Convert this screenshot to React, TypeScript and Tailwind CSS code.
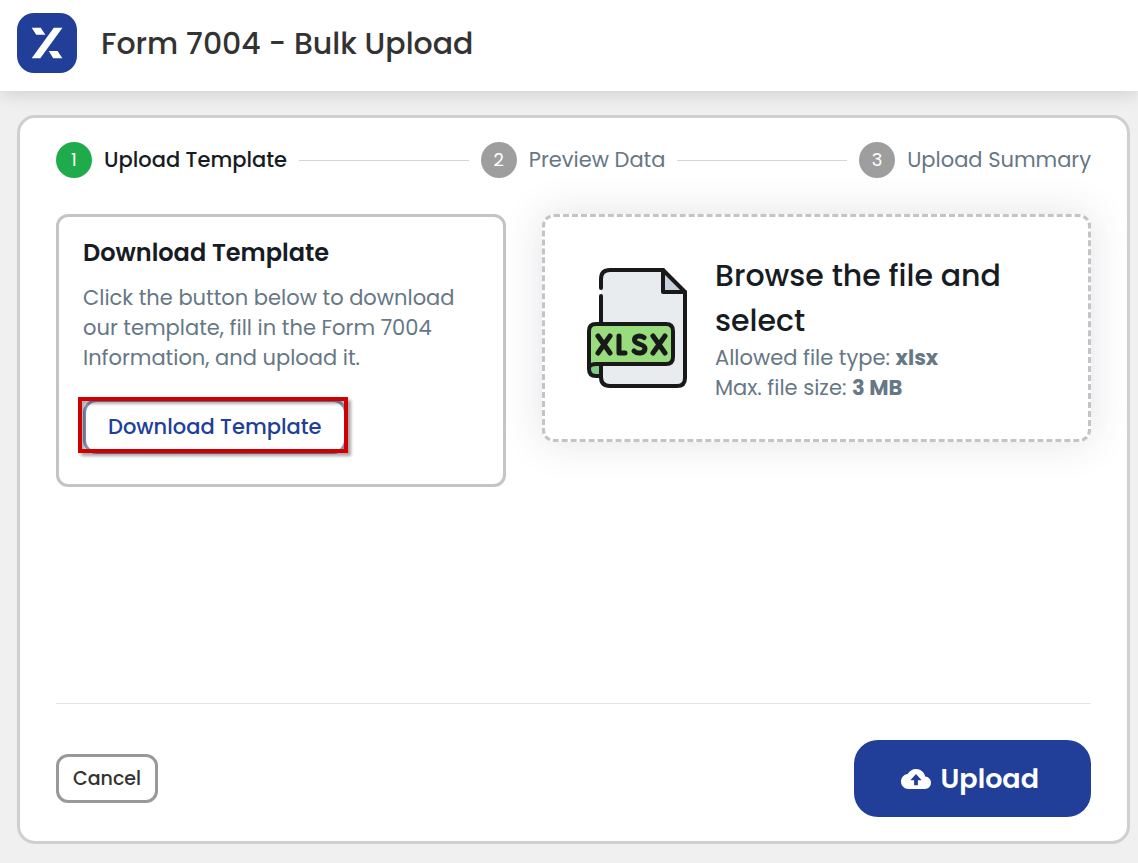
import { Fragment } from "react";

function Logo() {
    return (
        <svg viewBox="0 0 60 60" className="size-[60px] shrink-0" aria-hidden="true">
            <rect width="60" height="60" rx="17" fill="#213f99" />
            <path
                d="M36.800 14.700h8.700L23.300 45.300H14.700zM14.700 14.700h9l4.700 7H19.200zM31.800 38h8.700l4.900 7.300h-9.200z"
                fill="#fff"
            />
        </svg>
    );
}

function XlsxIcon() {
    return (
        <svg viewBox="0 0 100 120" className="h-[120px] w-[100px] shrink-0" aria-hidden="true">
            <path d="M14 8q0-6 6-6h56l22 22v88q0 6-6 6H22q-8 0-8-8z" fill="#e8ecef" />
            <path d="M76 2v22h22z" fill="#c8cfdf" />
            <path d="M14 96H2v5q0 7 7 7h5z" fill="#7ecb83" />
            <g fill="none" stroke="#191919" strokeWidth="4" strokeLinecap="round" strokeLinejoin="round">
                <path d="M14 20v-9q0-9 9-9h53l22 22v86q0 8-8 8H23q-9 0-9-9V97M14 54V28" />
                <path d="M76 2v22h22" />
                <path d="M2 94v7q0 7 7 7h5" />
                <path d="M9 56h70q7 0 7 7v26q0 7-7 7H9q-5 0-7 3V63q0-7 7-7z" fill="#98dc7d" />
            </g>
            <g fill="none" stroke="#191919" strokeWidth="5" strokeLinecap="round" strokeLinejoin="round">
                <path d="M11 68l12 17M23 68L11 85" />
                <path d="M32 68v17h6" />
                <path d="M57 69.500C54 67.500 47.500 67 47.500 72c0 5 10.500 3.500 10.500 8.500 0 5.500-8 5.500-11 2.500" />
                <path d="M66 68l12 17M78 68L66 85" />
            </g>
        </svg>
    );
}

function CloudUploadIcon() {
    return (
        <svg viewBox="0 4 24 16" className="h-5 w-[30px]" fill="currentColor" aria-hidden="true">
            <path d="M19.350 10.040C18.670 6.590 15.640 4 12 4 9.110 4 6.600 5.640 5.350 8.040 2.340 8.360 0 10.910 0 14c0 3.310 2.690 6 6 6h13c2.760 0 5-2.240 5-5 0-2.640-2.050-4.780-4.650-4.960zM13.500 13v4h-3v-4H7.500l4.500-5 4.500 5z" />
        </svg>
    );
}

const steps = ["Upload Template", "Preview Data", "Upload Summary"];

function Stepper() {
    return (
        <ol className="flex items-center gap-3">
            {steps.map((label, i) => (
                <Fragment key={label}>
                    {i > 0 && <li aria-hidden="true" className="h-px flex-1 bg-[#d5d5d5]" />}
                    <li className="flex items-center gap-3" aria-current={i === 0 ? "step" : undefined}>
                        <span
                            className={
                                i === 0
                                    ? "flex size-9 shrink-0 items-center justify-center rounded-full bg-[#1fab4b] text-lg text-white"
                                    : "flex size-9 shrink-0 items-center justify-center rounded-full bg-[#9e9e9e] text-lg text-white"
                            }
                        >
                            {i + 1}
                        </span>
                        <span
                            className={
                                i === 0
                                    ? "whitespace-nowrap text-[21px] leading-[30px] font-medium text-[#171c24]"
                                    : "whitespace-nowrap text-[21px] leading-[30px] text-[#667785]"
                            }
                        >
                            {label}
                        </span>
                    </li>
                </Fragment>
            ))}
        </ol>
    );
}

export default function App() {
    return (
        <div className="flex min-h-screen flex-col bg-[#f0f0f0] font-['Poppins','Inter',sans-serif] text-[#171c24]">
            <header className="flex items-center gap-6 bg-white px-[17px] pt-[13px] pb-[18px] shadow-[0_3px_18px_rgba(0,0,0,0.14)]">
                <Logo />
                <h1 className="text-[30px] leading-[45px] font-medium text-[#333333]">Form 7004 - Bulk Upload</h1>
            </header>

            <main className="mt-6 mr-2 mb-[19px] ml-[17px] flex flex-1 flex-col rounded-[18px] border-3 border-[#cfcfcf] bg-white px-9 py-6">
                <Stepper />

                <div className="mt-9 grid grid-cols-[450fr_549fr] items-start gap-9">
                    {/* Template card */}
                    <section className="rounded-xl border-3 border-[#c4c4c4] px-6 pt-[18px] pb-[30px]">
                        <h2 className="text-[24px] leading-[36px] font-semibold">Download Template</h2>
                        <p className="mt-3 text-[21px] leading-[30px] text-[#667785]">
                            Click the button below to download our template, fill in the Form 7004 Information, and
                            upload it.
                        </p>
                        <div className="relative mt-[26px] w-fit">
                            <button
                                type="button"
                                className="rounded-[14px] border-3 border-[#8995c1] px-[22px] py-3 text-[21px] leading-[25px] font-medium text-[#213f99]"
                            >
                                Download Template
                            </button>
                            <span className="pointer-events-none absolute -top-0.5 -right-px bottom-px -left-[5px] border-4 border-[#d00000] shadow-[3px_3px_3px_rgba(0,0,0,0.35),inset_3px_3px_3px_rgba(0,0,0,0.3)]" />
                        </div>
                    </section>

                    {/* File picker */}
                    <label className="flex cursor-pointer items-center gap-7 rounded-xl border-3 border-dashed border-[#c4c4c4] bg-white px-[42px] py-9 shadow-[0_0_40px_rgba(50,60,80,0.14)]">
                        <input type="file" accept=".xlsx" className="sr-only" />
                        <XlsxIcon />
                        <span>
                            <span className="block text-[30px] leading-[45px] font-medium">
                                Browse the file and select
                            </span>
                            <span className="block text-[21px] leading-[30px] text-[#667785]">
                                Allowed file type: <b>xlsx</b>
                            </span>
                            <span className="block text-[21px] leading-[30px] text-[#667785]">
                                Max. file size: <b>3 MB</b>
                            </span>
                        </span>
                    </label>
                </div>

                <footer className="mt-auto flex items-center justify-between border-t border-[#e5e5e5] pt-9">
                    <button
                        type="button"
                        className="rounded-xl border-3 border-[#999999] px-[14px] py-2 text-[19px] leading-[27px] font-medium text-[#333333]"
                    >
                        Cancel
                    </button>
                    <button
                        type="button"
                        className="flex items-center gap-2.5 rounded-3xl bg-[#213f99] py-4 pr-[52px] pl-[47px] text-[27px] leading-[45px] font-semibold text-white"
                    >
                        <CloudUploadIcon />
                        Upload
                    </button>
                </footer>
            </main>
        </div>
    );
}
